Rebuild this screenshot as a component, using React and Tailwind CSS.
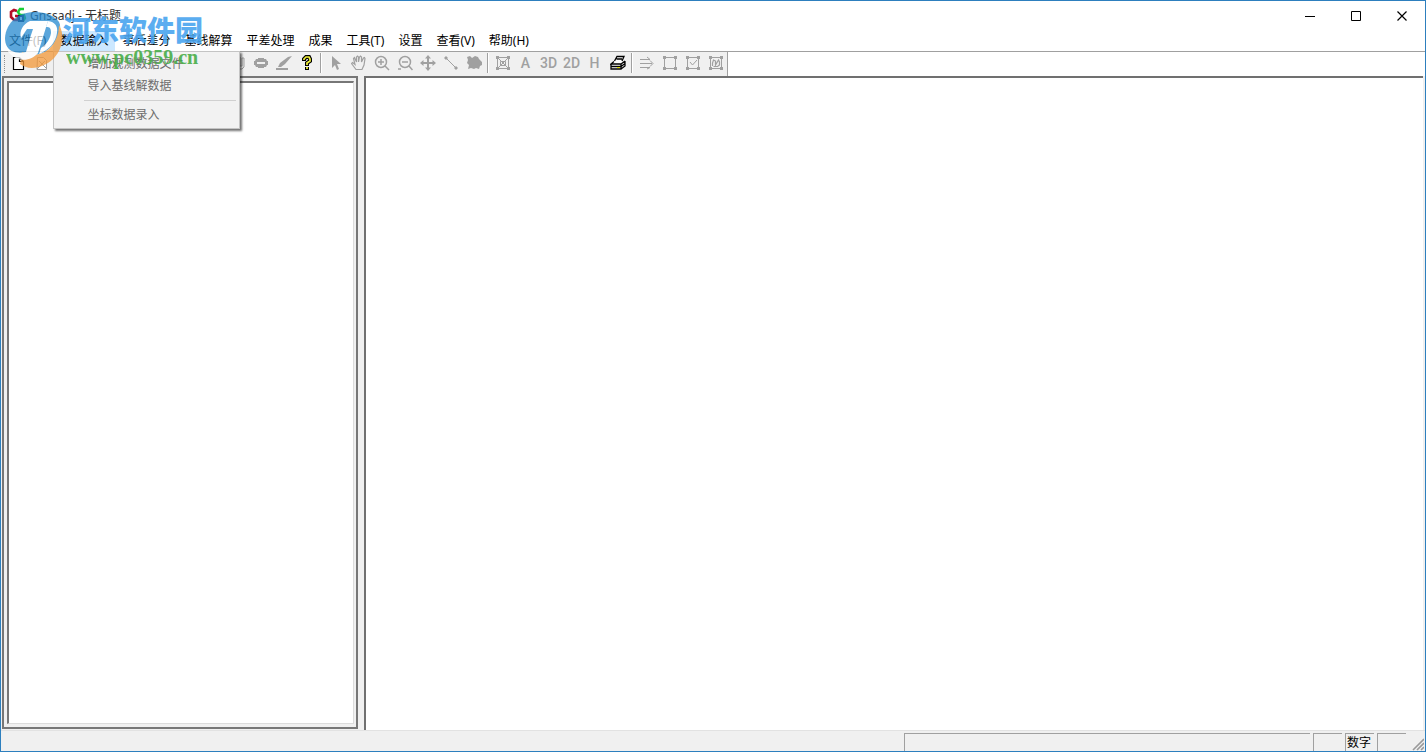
import { useState } from 'react';

const menus = ['文件(F)', '数据输入', '事后差分', '基线解算', '平差处理', '成果', '工具(T)', '设置', '查看(V)', '帮助(H)'];

const icons = {
    new: <path d="M2.500 2.500h6l4 4v8h-10zM8.500 2.500v4h4" fill="#fff" stroke="#000" strokeWidth="1.2" />,
    open: <path d="M3.500 2.500h6l3 3v9h-9.500zM3 14l5-5 5 5M5 6l3 3 3-3" fill="#fff" stroke="#a0a0a0" />,
    save: <path d="M2.500 2.500h11v11h-11zM5 3v4h6V3M5 13v-4h6v4" fill="none" stroke="#a0a0a0" />,
    find: <path d="M3 6h4v8H3zM9 6h4v8H9zM4 2h2v4M10 2h2v4" fill="none" stroke="#a0a0a0" />,
    tube: <path d="M3 6h3v5h2V2h2v9h2V3h2v9l-2 2H5l-2-1z" fill="#eee" stroke="#a0a0a0" />,
    disc: (
        <>
            <path d="M5 3h6v1h2l1 2h1v4h-1l-1 2h-2v1H5v-1H3l-1-2H1V6h1l1-2h2z" fill="#a0a0a0" />
            <path d="M4 7h8v2H4z" fill="#f0f0f0" />
        </>
    ),
    pen: <path d="M2 12l2-4 8-6 4-1-7 8-4 3zM0 13h12v2H0z" fill="#a0a0a0" />,
    pointer: <path d="M4 1v12l3-3 2 5 2-1-2-5h4z" fill="#a0a0a0" />,
    hand: <path d="M5 14.500L.5 8.500l1-1 2.500 2L2.500 3.500l1-1L5.500 7 5.500 2l1-1 1 1v5l1-5 1-1 1 1v5l2-4 1-.5.500 1L13 10l-2 4.500z" fill="none" stroke="#a0a0a0" strokeWidth="1.2" />,
    zoomIn: <path d="M12.500 7a5.500 5.500 0 1 1-11 0a5.500 5.500 0 1 1 11 0M11 11l4 4M4 7h6M7 4v6" fill="none" stroke="#a0a0a0" strokeWidth="1.5" />,
    zoomOut: <path d="M13.500 7a5.500 5.500 0 1 1-11 0a5.500 5.500 0 1 1 11 0M12 11l3.500 4M5 7h6M1 14h3" fill="none" stroke="#a0a0a0" strokeWidth="1.5" />,
    move: <path d="M8 0l3 3.500H9V7h3.500V5L16 8l-3.500 3V9H9v3.500h2L8 16l-3-3.500h2V9H3.500v2L0 8l3.500-3v2H7V3.500H5z" fill="#a0a0a0" />,
    line: <path d="M2 2h2v2H2zM12 12h2v2h-2zM3 3l10 10" fill="#a0a0a0" stroke="#a0a0a0" />,
    blob: <path d="M1 2l3-1 2 2 3-2 3 1 1 2 3 3v3l-2 1-1 3-3-1-2 1-3-1-3 1 1-4-2-2 1-3z" fill="#a0a0a0" />,
    printer: (
        <>
            <path d="M4 6l3-5h7l-2 5 3 1v4l-4 4H1V9l3-3z" fill="#fff" />
            <path d="M4.500 6L7 1.500h7L12 6M6.500 4H12M4 6.500L1 9h10l4-3M1 9v5h10V9M11 14l4-3V6M1 11.500h10l4-3" fill="none" stroke="#000" strokeWidth="1.3" />
            <path d="M7 12h3v1H7z" fill="#dede00" />
        </>
    ),
    arrows: <path d="M1 4.500h10M8 2l3 2.500M1 8.500h12M11 5.500l3 3-3 3M1 12.500h10M8 14l3-1.500" fill="none" stroke="#a0a0a0" />,
};

const nodes = <path d="M1 1h3v3H1zM12 1h3v3h-3zM1 12h3v3H1zM12 12h3v3h-3z" fill="#a0a0a0" />;
const frame = <path d="M2.500 2.500h11v11h-11z" fill="none" stroke="#a0a0a0" />;

icons.box = <>{frame}{nodes}</>;
icons.boxCross = <>{frame}{nodes}<path d="M3 3l10 10M13 3L3 13M5.500 6.500h5v4h-5z" fill="none" stroke="#a0a0a0" /></>;
icons.boxCheck = <>{frame}{nodes}<path d="M5 7l2.500 3L12 5" fill="none" stroke="#a0a0a0" /></>;
icons.boxWave = <>{frame}{nodes}<path d="M4.500 11V8l1-3 2 1v4l3-5 1 2v3l-2 1.500h-4" fill="none" stroke="#a0a0a0" strokeWidth="1.2" /></>;

const groups = [
    ['new', 'open', 'save'],
    ['save', 'find', 'open'],
    ['find', 'save', 'find', 'tube', 'disc', 'pen', '?'],
    ['pointer', 'hand', 'zoomIn', 'zoomOut', 'move', 'line', 'blob'],
    ['boxCross', 'A', '3D', '2D', 'H', 'printer'],
    ['arrows', 'box', 'boxCheck', 'boxWave'],
];

function ToolButton({ name }) {
    return (
        <button aria-label={name} className="flex h-[22px] w-[23px] shrink-0 items-center justify-center">
            {name === '?' ? (
                <svg width="14" height="16" viewBox="0 0 14 16" fill="none">
                    <path d="M4 6V4l2-2h3l1 2v2L7 8v3M7 12v3" stroke="#000" strokeWidth="4" />
                    <path d="M4 5V4l2-2h3l1 2v2L7 8v2M7 12v2" stroke="#f2f23a" strokeWidth="1.7" />
                </svg>
            ) : icons[name] ? (
                <svg width="16" height="16" viewBox="0 0 16 16">{icons[name]}</svg>
            ) : (
                <span className="font-['Roboto',sans-serif] text-[14px] font-medium text-[#a0a0a0]">{name}</span>
            )}
        </button>
    );
}

function Toolbar() {
    return (
        <div className="flex h-[25px] shrink-0 border-t border-[#a0a0a0] bg-white">
            <div className="flex items-start border-r border-[#a0a0a0] bg-[#f0f0f0]">
                <div className="mt-[3px] mr-[2px] ml-[3px] h-[18px] w-px border-l border-dotted border-[#909090]" />
                {groups.map((group, i) => (
                    <div key={i} className="flex items-center">
                        {i > 0 && <div className="mx-[2px] h-5 w-[2px] border-l border-[#a0a0a0] bg-white" />}
                        {group.map((name, j) => <ToolButton key={j} name={name} />)}
                    </div>
                ))}
            </div>
        </div>
    );
}

function DropDown() {
    return (
        <div className="absolute top-full left-0 z-10 w-[187px] border border-[#c4c4c4] bg-[#f2f2f2] pt-px pb-[2px] text-[#6d6d6d] shadow-[2px_2px_2px_rgba(0,0,0,0.55)]">
            <button className="block h-[22px] w-full pl-[33px] text-left">增加观测数据文件</button>
            <button className="block h-[22px] w-full pl-[33px] text-left">导入基线解数据</button>
            <div className="my-[3px] mr-[3px] ml-[30px] h-px bg-[#d0d0d0]" />
            <button className="block h-[22px] w-full pl-[33px] text-left">坐标数据录入</button>
        </div>
    );
}

function Watermark() {
    return (
        <div className="pointer-events-none absolute top-[10px] left-[4px] z-20 flex">
            <svg width="60" height="60" viewBox="0 0 60 60" className="shrink-0 opacity-75">
                <path d="M0 27C1 11 14 1 30 1c11 0 20 4 24 10 3 5 0 16-7 24-9 10-24 12-38 7C3 39 0 34 0 27z" fill="#2589cf" />
                <path d="M54 14c3 5 4 10 3 16-2 15-14 26-30 27-5 0-9-2-12-4l2-12c10 5 20 3 27-3 6-6 10-14 10-24z" fill="#f39838" />
                <path d="M0 33c4 8 12 10 21 8l4-14 3-9h-6l-6 9c-2-7 2-14 9-17h18l-10 32c-5 6-14 9-22 5C5 44 1 39 0 33z" fill="#fff" />
                <path d="M43 10c7 1 10 5 9 12-1 9-8 17-18 21l2-6c6-4 9-9 10-15 0-5-1-6-5-6z" fill="#fff" />
            </svg>
            <div className="ml-[-2px] pt-1">
                <div className="font-['Noto_Sans_CJK_SC',sans-serif] text-[28px] leading-[28px] font-black text-[#4aa5ef] opacity-90">河东软件园</div>
                <div className="mt-[4px] ml-[3px] font-['Liberation_Serif',serif] text-[20px] leading-[20px] font-bold text-[#49ae49] opacity-90">www.pc0359.cn</div>
            </div>
        </div>
    );
}

function TitleBar() {
    return (
        <header className="flex h-[30px] shrink-0 items-center pl-2">
            <svg width="18" height="18" viewBox="0 0 18 18" fill="none">
                <path d="M8 4L5 3 2 5v5l3 3h4V9H6" stroke="#b50d27" strokeWidth="2.6" />
                <path d="M15 2h-4L9 5l2 3h4l1 3-2 3" stroke="#19cf35" strokeWidth="2.4" />
                <path d="M10 9h4v5h-4z" stroke="#17214b" strokeWidth="2" />
            </svg>
            <h1 className="ml-[3px] text-[12px] text-[#303030]">Gnssadj - 无标题</h1>
            <div className="ml-auto flex">
                <button aria-label="最小化" className="flex h-7 w-[46px] items-center justify-center">
                    <svg width="11" height="11"><path d="M0 5.500h10" stroke="#000" /></svg>
                </button>
                <button aria-label="最大化" className="flex h-7 w-[46px] items-center justify-center">
                    <svg width="11" height="11"><path d="M.5.500h9v9h-9z" fill="none" stroke="#000" /></svg>
                </button>
                <button aria-label="关闭" className="flex h-7 w-[46px] items-center justify-center">
                    <svg width="11" height="11"><path d="M.5.500l9 9M9.500.500l-9 9" stroke="#000" strokeWidth="1.2" /></svg>
                </button>
            </div>
        </header>
    );
}

function StatusBar() {
    return (
        <footer className="flex h-[21px] shrink-0 gap-[3px] border-t border-[#e2e2e2] bg-[#f0f0f0] pt-[2px] pr-px">
            <div className="flex-1" />
            <div className="w-[406px] border-t border-l border-[#a0a0a0]" />
            <div className="w-[29px] border-t border-l border-[#a0a0a0]" />
            <div className="w-[29px] border-t border-l border-[#a0a0a0] pl-px leading-[17px]">数字</div>
            <div className="w-[29px] border-t border-l border-[#a0a0a0]" />
            <svg width="15" height="18" viewBox="0 0 15 18" className="shrink-0">
                <path d="M4 17L15 6M8 17l7-7M12 17l3-3" stroke="#9a9a9a" strokeWidth="1.6" />
            </svg>
        </footer>
    );
}

export default function App() {
    const [open, setOpen] = useState('数据输入');

    return (
        <div className="relative flex h-screen flex-col overflow-hidden border border-[#2d7fbe] bg-white font-['Noto_Sans','Noto_Sans_CJK_SC',sans-serif] text-[12px] text-black">
            <TitleBar />
            <nav className="flex h-5 shrink-0 pl-px">
                {menus.map(name => (
                    <div key={name} className="relative">
                        <button
                            onClick={() => setOpen(open === name ? '' : name)}
                            className={`h-5 px-[7px] whitespace-nowrap ${open === name ? 'bg-[#cce8ff]' : ''}`}
                        >
                            {name}
                        </button>
                        {open === name && name === '数据输入' && <DropDown />}
                    </div>
                ))}
            </nav>
            <Toolbar />
            <main className="flex min-h-0 flex-1 gap-[6px] bg-[#f0f0f0] pr-[2px] pl-[1px]">
                <aside className="mb-px flex w-[356px] shrink-0 border-2 border-[#777777] bg-[#f0f0f0] p-[3px] pr-[2px]">
                    <div className="flex-1 border-t-2 border-r border-b border-l-2 border-[#777777] border-r-[#dcdcdc] border-b-[#dcdcdc] bg-white" />
                </aside>
                <section className="flex-1 border-t-2 border-l-2 border-[#707070] bg-white" />
            </main>
            <StatusBar />
            <Watermark />
        </div>
    );
}
